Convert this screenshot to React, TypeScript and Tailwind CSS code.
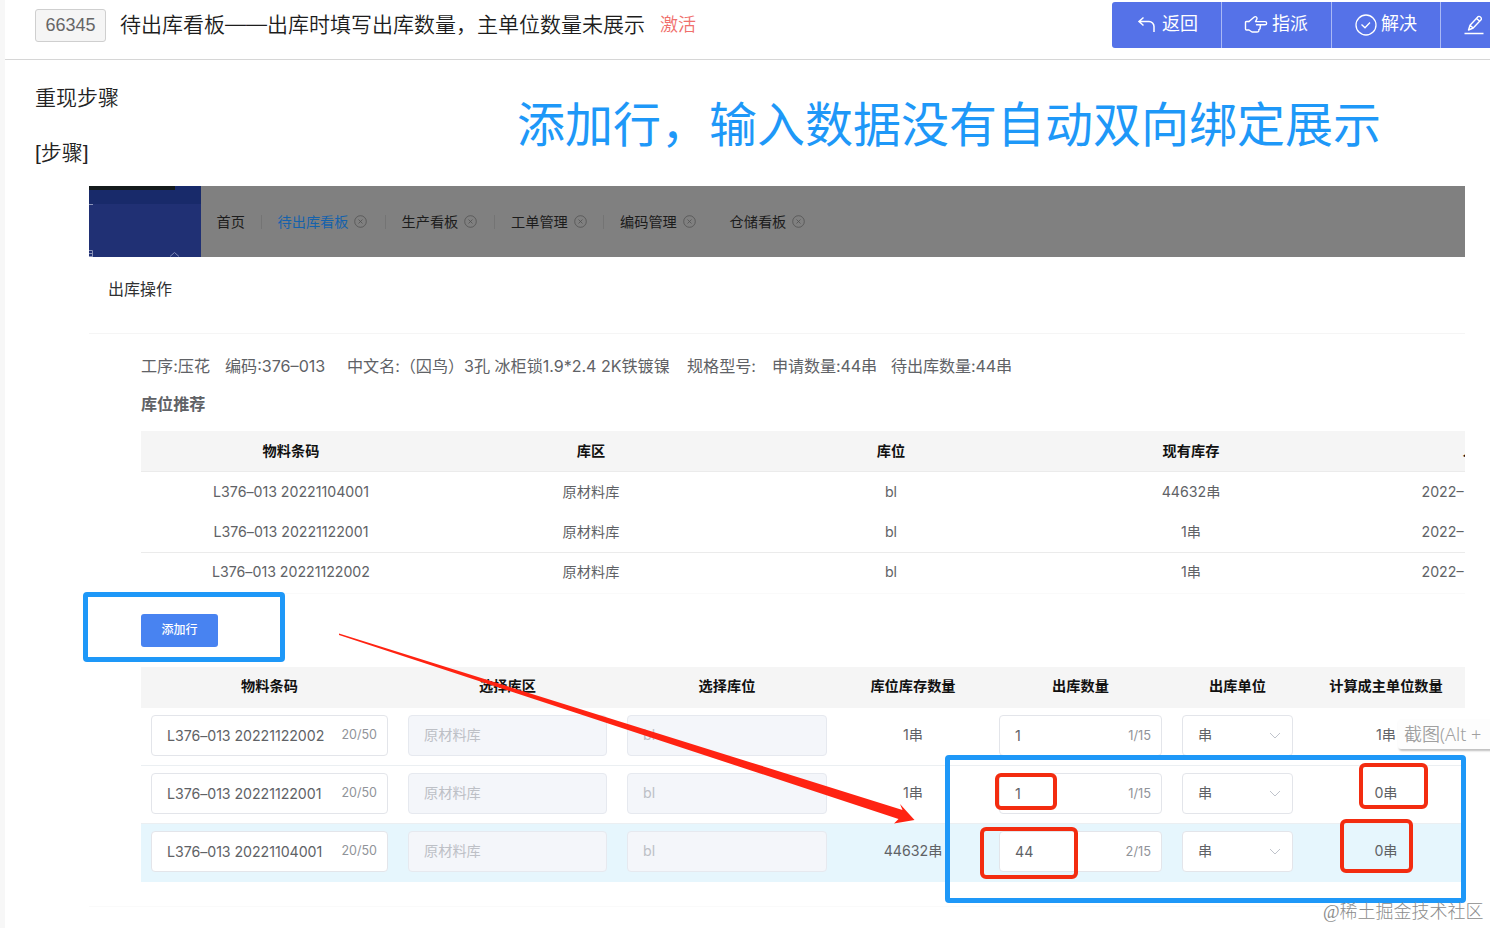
import { ReactNode } from "react";

type StockRow = {
  code: string;
  area: string;
  slot: string;
  stock: string;
  date: string;
};

type OutRow = {
  code: string;
  stock: string;
  amount: string;
  count: string;
  total: string;
  active?: boolean;
};

const TABS = [
  { label: "首页", closable: false, width: "w-[61px]" },
  { label: "待出库看板", closable: true, active: true, width: "w-[124px]" },
  { label: "生产看板", closable: true, width: "w-[109.500px]" },
  { label: "工单管理", closable: true, width: "w-[109px]" },
  { label: "编码管理", closable: true, width: "w-[109.500px]" },
  { label: "仓储看板", closable: true, width: "w-[110px]" },
];

const STOCK_ROWS: StockRow[] = [
  { code: "L376–013 20221104001", area: "原材料库", slot: "bl", stock: "44632串", date: "2022–" },
  { code: "L376–013 20221122001", area: "原材料库", slot: "bl", stock: "1串", date: "2022–" },
  { code: "L376–013 20221122002", area: "原材料库", slot: "bl", stock: "1串", date: "2022–" },
];

const OUT_ROWS: OutRow[] = [
  { code: "L376–013 20221122002", stock: "1串", amount: "1", count: "1/15", total: "1串" },
  { code: "L376–013 20221122001", stock: "1串", amount: "1", count: "1/15", total: "0串" },
  { code: "L376–013 20221104001", stock: "44632串", amount: "44", count: "2/15", total: "0串", active: true },
];

const OUT_HEADERS = ["物料条码", "选择库区", "选择库位", "库位库存数量", "出库数量", "出库单位", "计算成主单位数量"];

const STOCK_GRID = "grid grid-cols-[300px_300px_300px_300px_124px]";
const OUT_GRID = "grid grid-cols-[257px_219px_220px_152px_183px_131px_162px]";

function BackIcon() {
  return (
    <svg width="20" height="20" viewBox="0 0 20 20" fill="none" stroke="currentColor" strokeWidth="1.5">
      <path d="M6.500 2.500 2 6.500l4.500 4M2.500 6.500H12a5 5 0 0 1 5 5V17" />
    </svg>
  );
}

function HandIcon() {
  return (
    <svg width="24" height="20" viewBox="0 0 24 20" fill="none" stroke="currentColor" strokeWidth="1.4" strokeLinejoin="round" strokeLinecap="round">
      <path d="M5 6.500 10 2.200c1.600-1.400 3.800.2 2.800 2L11.500 6.600H21c2.200 0 2.200 3.200 0 3.200h-5" />
      <path d="M5 6.500H2.500c-.8 0-1 .4-1 1V14c0 .8.300 1 1 1H5l3 2h5c1.500 0 2.200-1 1.800-2.300 1.300-.5 1.700-1.600 1.200-2.600.7-.8.700-1.700 0-2.300h-3.500" />
    </svg>
  );
}

function CheckIcon() {
  return (
    <svg width="22" height="22" viewBox="0 0 22 22" fill="none" stroke="currentColor" strokeWidth="1.3">
      <circle cx="11" cy="11" r="10" />
      <path d="m6.500 10.500 3.500 3.300 5-5.300" />
    </svg>
  );
}

function PencilIcon() {
  return (
    <svg width="20" height="20" viewBox="0 0 20 20" fill="none" stroke="currentColor" strokeWidth="1.4" strokeLinejoin="round">
      <path d="M4.500 15 6 10.200l8-8.500c1.500-1 4 .7 3.300 2.800L9.200 13zM12.500 3.500l3.300 2.800M6 10.200 9.200 13" />
      <path d="M.5 18.500h19" />
    </svg>
  );
}

function CloseIcon() {
  return (
    <svg width="13" height="13" viewBox="0 0 13 13" fill="none" stroke="#525252" strokeWidth="0.8">
      <circle cx="6.500" cy="6.500" r="5.800" />
      <path d="m4.500 4.500 4 4m0-4-4 4" />
    </svg>
  );
}

function ToolButton({ icon, label, className }: { icon: ReactNode; label?: string; className: string }) {
  return (
    <button className={`flex h-full shrink-0 items-center border-r border-[#a9b8f5] text-[18px] leading-none text-white ${className}`}>
      {icon}
      {label && <span className="-mt-0.5 whitespace-nowrap">{label}</span>}
    </button>
  );
}

function Field({ children, disabled, className }: { children: ReactNode; disabled?: boolean; className?: string }) {
  return (
    <div
      className={`mx-2.5 flex h-[41px] items-center rounded border pl-[15px] pr-2.5 ${
        disabled ? "border-[#e6e9ef] bg-[#f4f6fa] text-[#bdc0c6]" : "border-[#e3e5ea] bg-white"
      } ${className ?? ""}`}
    >
      {children}
    </div>
  );
}

function Header() {
  return (
    <header className="flex h-[60px] shrink-0 border-b border-[#d6d6d6] pl-[30px]">
      <div className="mt-[9px] flex h-[33px] w-[71px] items-center justify-center rounded-[3px] border border-[#cfcfcf] bg-[#f5f5f5] font-['Liberation_Sans',sans-serif] text-[18px] text-[#666]">
        66345
      </div>
      <h1 className="ml-[14px] mt-[9px] whitespace-nowrap text-[21px] font-[350] leading-8 text-[#1d1d1d]">
        待出库看板——出库时填写出库数量，主单位数量未展示
      </h1>
      <span className="ml-[15px] mt-[9px] text-[18px] font-[350] leading-8 text-[#f0706c]">激活</span>
      <div className="ml-auto mt-0.5 flex h-[46px] w-[378px] shrink-0 overflow-hidden rounded-l-[3px] bg-[#5572e8]">
        <ToolButton icon={<BackIcon />} label="返回" className="w-[110px] gap-[5px] pl-[25px]" />
        <ToolButton icon={<HandIcon />} label="指派" className="w-[110px] gap-1 pl-[22px]" />
        <ToolButton icon={<CheckIcon />} label="解决" className="w-[109px] gap-1 pl-[23px]" />
        <ToolButton icon={<PencilIcon />} className="w-[109px] pl-[23px]" />
      </div>
    </header>
  );
}

function TabBar() {
  return (
    <div className="flex h-[71px] bg-[#808080]">
      <div className="relative w-[111.500px] shrink-0 overflow-hidden bg-[#203074]">
        <div className="h-[18px] bg-[#182a6a]">
          <div className="h-1 w-[86px] bg-[#141a1c]" />
        </div>
        <div className="h-px w-1 bg-[#8b94b8]" />
        <svg className="absolute bottom-0 left-0" width="4" height="8" fill="none" stroke="#8b94b8">
          <path d="M0 1.500h3.500V8M0 4.500h3.500M0 7.500h3.500" />
        </svg>
        <svg className="absolute bottom-0 left-20" width="11" height="6" fill="none" stroke="#7d88b4">
          <path d="m1 5.500 4.500-4 4.500 4" />
        </svg>
      </div>
      <div className="flex items-center pl-4 text-[14.2px] text-[#1c1c1c]">
        {TABS.map((tab, i) => (
          <div key={tab.label} className={`flex h-5 items-center ${tab.width}`}>
            <span className={`whitespace-nowrap ${tab.active ? "text-[#1562ac]" : ""}`}>{tab.label}</span>
            {tab.closable && (
              <span className="ml-1.5">
                <CloseIcon />
              </span>
            )}
            {i < 4 && <i className="ml-auto mr-4 h-3.5 w-px bg-[#747474]" />}
          </div>
        ))}
      </div>
    </div>
  );
}

function StockTable() {
  return (
    <div className="text-[14.2px] text-[#606266]">
      <div className={`${STOCK_GRID} h-[41px] items-center overflow-hidden border-b border-[#ebebeb] bg-[#f5f5f5] text-center font-bold text-[#111]`}>
        <span>物料条码</span>
        <span>库区</span>
        <span>库位</span>
        <span>现有库存</span>
        <span className="overflow-hidden whitespace-nowrap pl-[121.500px] text-left">入库时间</span>
      </div>
      {STOCK_ROWS.map((row, i) => (
        <div
          key={row.code}
          className={`${STOCK_GRID} h-[40.500px] items-center pb-0.5 text-center ${i === 1 ? "border-b border-[#ebebeb]" : ""} ${i === 2 ? "border-b border-[#fafafa]" : ""}`}
        >
          <span className="tracking-[-0.02px]">{row.code}</span>
          <span>{row.area}</span>
          <span>{row.slot}</span>
          <span>{row.stock}</span>
          <span className="overflow-hidden whitespace-nowrap pl-[80.500px] text-left">{row.date}</span>
        </div>
      ))}
    </div>
  );
}

function OutTable() {
  return (
    <div className="text-[14.2px] text-[#606266]">
      <div className={`${OUT_GRID} h-[41px] items-center bg-[#f5f5f5] pb-0.5 text-center font-bold text-[#111]`}>
        {OUT_HEADERS.map((h) => (
          <span key={h} className="whitespace-nowrap last:pl-1">
            {h}
          </span>
        ))}
      </div>
      {OUT_ROWS.map((row) => (
        <div
          key={row.code}
          className={`${OUT_GRID} h-[58px] items-center border-b pb-0.5 text-center ${
            row.active ? "border-[#e6f6fd] bg-[#e6f6fd]" : "border-[#ebeff2]"
          }`}
        >
          <Field>
            <span className="whitespace-nowrap pt-px tracking-[-0.05px]">{row.code}</span>
            <span className="ml-auto pt-px text-[12.500px] text-[#909399]">20/50</span>
          </Field>
          <Field disabled>原材料库</Field>
          <Field disabled>bl</Field>
          <span>{row.stock}</span>
          <Field>
            <span className="pt-px">{row.amount}</span>
            <span className="ml-auto pt-px text-[12.800px] text-[#909399]">{row.count}</span>
          </Field>
          <Field>
            <span>串</span>
            <svg className="ml-auto mr-px" width="12" height="7" fill="none" stroke="#c0c4cc">
              <path d="m1 1 5 5 5-5" />
            </svg>
          </Field>
          <span className="pl-1">{row.total}</span>
        </div>
      ))}
    </div>
  );
}

// hand-drawn marks that sit over the page
function Annotations() {
  return (
    <>
      <p className="absolute left-[517px] top-[93px] whitespace-nowrap text-[48px] leading-[64px] text-[#1e98f8]">
        添加行，输入数据没有自动双向绑定展示
      </p>
      <div className="absolute left-[83px] top-[592px] h-[70px] w-[202px] rounded-[4px] border-[5px] border-[#1e98f8]" />
      <svg className="absolute left-0 top-0" width="1490" height="928">
        <polygon points="339,633.5 902.5,810 900,804 914.5,820 894,823.5 898.5,819 339,635" fill="#ff2312" />
      </svg>
      <div className="absolute left-[945px] top-[755px] h-[148px] w-[521px] rounded-[4px] border-[5px] border-[#1e98f8]" />
      <div className="absolute left-[995px] top-[773px] h-[37px] w-[62px] rounded-md border-4 border-[#f32c10]" />
      <div className="absolute left-[980px] top-[827px] h-[52px] w-[98px] rounded-md border-4 border-[#f32c10]" />
      <div className="absolute left-[1359px] top-[763px] h-[46px] w-[69px] rounded-md border-4 border-[#f32c10]" />
      <div className="absolute left-[1340px] top-[819px] h-[54px] w-[73px] rounded-md border-4 border-[#f32c10]" />
      <div className="absolute left-[1398px] top-[719px] h-[30px] w-[110px] whitespace-nowrap rounded-[3px] bg-[#fdfdfd] pl-1.5 font-['Noto_Sans','Noto_Sans_CJK_SC',sans-serif] text-[18px] font-[350] leading-[30px] text-[#a0a0a0] shadow-[1px_2px_2px_rgba(0,0,0,0.25)]">
        截图(Alt +
      </div>
      <span className="absolute left-[1323px] top-[900px] whitespace-nowrap font-['Liberation_Serif','Noto_Sans_CJK_SC',serif] text-[18px] font-light leading-6 text-[#8c8c8c]">
        @稀土掘金技术社区
      </span>
    </>
  );
}

export default function App() {
  return (
    <div className="relative flex h-[928px] w-[1490px] overflow-hidden bg-white font-['Inter','Noto_Sans_CJK_SC',sans-serif]">
      <div className="w-[5px] shrink-0 bg-[#f7f7f7]" />
      <main className="flex min-w-0 flex-1 flex-col">
        <Header />
        <h2 className="ml-[30px] mt-[22px] text-[21px] font-[350] leading-8 text-[#222]">重现步骤</h2>
        <p className="ml-[30px] mt-[23px] font-['Liberation_Sans','Noto_Sans_CJK_SC',sans-serif] text-[21px] font-[350] leading-8 text-[#222]">
          [步骤]
        </p>

        <section className="ml-[84px] mt-[17px] w-[1376px]">
          <TabBar />
          <div className="flex h-[77px] items-center border-b border-[#f5f5f5] pb-3 pl-[19px] text-[16px] text-[#303133]">
            出库操作
          </div>
          <div className="pl-[52px]">
            <div className="mt-[20px] flex h-6 items-center whitespace-nowrap text-[16.1px] text-[#606266]">
              <span className="w-[84px]">工序:压花</span>
              <span className="w-[122px]">编码:376–013</span>
              <span className="w-[340px] tracking-[-0.03px]">中文名:（囚鸟）3孔 冰柜锁1.9*2.4 2K铁镀镍</span>
              <span className="w-[85px]">规格型号:</span>
              <span className="w-[119px] tracking-[-0.1px]">申请数量:44串</span>
              <span className="tracking-[-0.1px]">待出库数量:44串</span>
            </div>
            <h3 className="mt-3.5 text-[16.1px] font-bold leading-6 text-[#606266]">库位推荐</h3>
            <div className="mt-[15px]">
              <StockTable />
            </div>
            <button className="mb-5 mt-[20px] flex h-[33px] w-[77px] items-center justify-center rounded-[3px] bg-[#4883f1] text-[12px] font-medium text-white">
              添加行
            </button>
            <OutTable />
          </div>
          <div className="mt-6 border-t border-[#fafafa]" />
        </section>
      </main>
      <Annotations />
    </div>
  );
}
